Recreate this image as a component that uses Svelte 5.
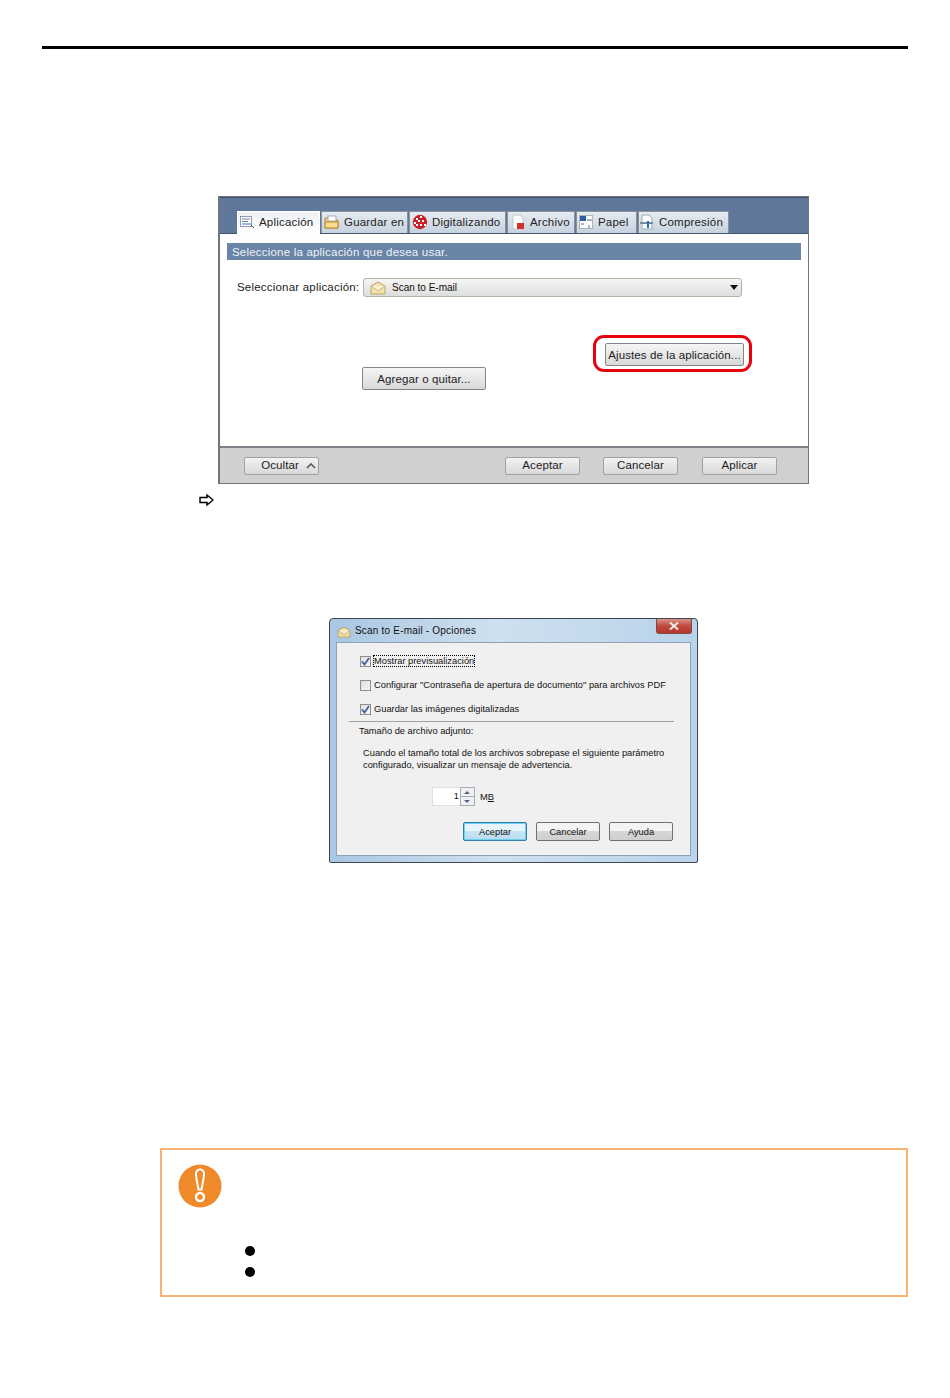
<script>
	const tabs = [
		{ label: 'Aplicación', w: 83, pad: 1, icon: 'app', active: true },
		{ label: 'Guardar en', w: 87, pad: 2, icon: 'folder' },
		{ label: 'Digitalizando', w: 97, pad: 2, icon: 'ball' },
		{ label: 'Archivo', w: 68, pad: 2, icon: 'file' },
		{ label: 'Papel', w: 61, pad: 1, icon: 'paper' },
		{ label: 'Compresión', w: 91, pad: 0, icon: 'press' }
	];

	const options = [
		{ label: 'Mostrar previsualización', checked: true, focus: true },
		{ label: 'Configurar "Contraseña de apertura de documento" para archivos PDF', checked: false },
		{ label: 'Guardar las imágenes digitalizadas', checked: true }
	];
</script>

<div class="page">
	<div class="rule"></div>

	<!-- pantalla de ajustes -->
	<section class="settings">
		<div class="tabbar">
			{#each tabs as tab}
				<div class="tab" class:active={tab.active} style="width: {tab.w}px; padding-left: {tab.pad}px">
					<svg class="tab-icon" viewBox="0 0 16 16" width="16" height="16">
						{#if tab.icon === 'app'}
							<rect x="1.500" y="2.500" width="11" height="10" fill="#fff" stroke="#8c9ab0" />
							<path d="M3 5h8M3 7.500h6" stroke="#6f7f96" />
							<path d="M3 10h9" stroke="#2f78c8" />
							<path d="M12 11l3 3" stroke="#555" />
						{:else if tab.icon === 'folder'}
							<path d="M1 4h5l1 2h7v8H1z" fill="#f3d27a" stroke="#b08a2e" />
							<rect x="4" y="2" width="8" height="5" fill="#fff" stroke="#aaa" />
							<path d="M1 8h13v6H1z" fill="#f7dc8e" stroke="#b08a2e" />
						{:else if tab.icon === 'ball'}
							<circle cx="8" cy="8" r="7.200" fill="#c8202a" />
							<path d="M4 4h2v2H4zM8 2h2v2H8zM6 6h2v2H6zM10 6h2v2h-2zM2 8h2v2H2zM4 10h2v2H4zM8 10h2v2H8zM12 10h2v2h-2z" fill="#fff" />
						{:else if tab.icon === 'file'}
							<path d="M3 1h7l3 3v11H3z" fill="#fff" stroke="#c4c4c4" />
							<rect x="7" y="9" width="7" height="6" fill="#d2332a" />
						{:else if tab.icon === 'paper'}
							<rect x="1.500" y="1.500" width="13" height="13" fill="#fff" stroke="#777" stroke-dasharray="1 1" />
							<rect x="2" y="2" width="6" height="5" fill="#2a5fa8" />
							<path d="M9 6h5M11 11v3M3 10h3" stroke="#666" />
						{:else}
							<path d="M3 1h7l3 3v11H3z" fill="#fff" stroke="#9aa" />
							<path d="M1 9h13" stroke="#7a8a9a" stroke-width="2" />
							<path d="M9 7v7" stroke="#1c6fd0" stroke-width="2" />
						{/if}
					</svg>
					<span>{tab.label}</span>
				</div>
			{/each}
		</div>

		<div class="settings-body">
			<div class="heading">Seleccione la aplicación que desea usar.</div>
			<div class="app-row">
				<span class="app-label">Seleccionar aplicación:</span>
				<div class="select">
					<svg viewBox="0 0 16 14" width="16" height="14">
						<path d="M1 5l7-4 7 4v8H1z" fill="#f5e2a8" stroke="#b9a56a" />
						<path d="M1 5l7 5 7-5" fill="#fbf2d2" stroke="#c9b57a" />
					</svg>
					<span class="select-text">Scan to E-mail</span>
					<span class="caret"></span>
				</div>
			</div>
			<div class="action-row">
				<button class="btn add">Agregar o quitar...</button>
				<div class="ring"><button class="btn prefs">Ajustes de la aplicación...</button></div>
			</div>
		</div>

		<div class="settings-foot">
			<button class="btn flat hide">
				Ocultar
				<svg viewBox="0 0 10 6" width="10" height="6"><path d="M1 5l4-4 4 4" fill="none" stroke="#555" stroke-width="1.600" /></svg>
			</button>
			<button class="btn flat accept">Aceptar</button>
			<button class="btn flat cancel">Cancelar</button>
			<button class="btn flat apply">Aplicar</button>
		</div>
	</section>

	<svg class="arrow" viewBox="0 0 15 12" width="15" height="12">
		<path d="M1 3.500h7V1l6 5-6 5V8.500H1z" fill="#fff" stroke="#000" stroke-width="1.400" />
	</svg>

	<!-- cuadro de opciones -->
	<section class="dialog">
		<div class="titlebar">
			<svg viewBox="0 0 16 14" width="14" height="12">
				<path d="M1 5l7-4 7 4v8H1z" fill="#f1dca0" stroke="#a99a70" />
				<path d="M1 5l7 5 7-5" fill="#faf0d0" stroke="#b8a878" />
			</svg>
			<span class="title">Scan to E-mail - Opciones</span>
			<div class="close">
				<svg viewBox="0 0 10 8" width="10" height="8"><path d="M1 0.500l8 7M9 0.500l-8 7" stroke="#eee" stroke-width="2" /></svg>
			</div>
		</div>
		<div class="panel">
			{#each options as opt}
				<div class="option">
					<span class="check">
						{#if opt.checked}
							<svg viewBox="0 0 9 9" width="9" height="9"><path d="M1 4.500l2.500 3L8 1" fill="none" stroke="#3d5f9e" stroke-width="1.700" /></svg>
						{/if}
					</span>
					<span class:focus={opt.focus}>{opt.label}</span>
				</div>
			{/each}
			<div class="sep"></div>
			<div class="size-title">Tamaño de archivo adjunto:</div>
			<p class="note">Cuando el tamaño total de los archivos sobrepase el siguiente parámetro<br />configurado, visualizar un mensaje de advertencia.</p>
			<div class="size-row">
				<div class="spin-input">1</div>
				<div class="spin">
					<span class="spin-up"></span>
					<span class="spin-down"></span>
				</div>
				<span class="unit">M<u>B</u></span>
			</div>
			<div class="dialog-buttons">
				<button class="vbtn default">Aceptar</button>
				<button class="vbtn">Cancelar</button>
				<button class="vbtn">Ayuda</button>
			</div>
		</div>
	</section>

	<!-- aviso -->
	<section class="notice">
		<svg class="notice-icon" viewBox="0 0 44 44" width="44" height="44">
			<circle cx="22" cy="22" r="21.500" fill="#ee8a2a" />
			<path d="M18 9.500a4 4 0 0 1 8 0c0 5-1.500 10-2.500 16h-3C19.500 19.500 18 14.500 18 9.500z" fill="none" stroke="#fff" stroke-width="2" />
			<circle cx="22" cy="33" r="4" fill="none" stroke="#fff" stroke-width="2.400" />
		</svg>
		<ul class="dots">
			<li></li>
			<li></li>
		</ul>
	</section>
</div>

<style>
	:global(body) {
		background: #fff;
	}

	.page {
		width: 950px;
		height: 1398px;
		padding-top: 46px;
		box-sizing: border-box;
		overflow: hidden;
		font-family: "Liberation Sans", Arial, sans-serif;
		color: #000;
	}

	.rule {
		height: 3px;
		margin: 0 42px 0 42px;
		background: #000;
	}

	.settings {
		width: 591px;
		height: 288px;
		margin: 147px 0 0 218px;
		box-sizing: border-box;
		display: flex;
		flex-direction: column;
		border: 1px solid #72767c;
		border-left-width: 2px;
		background: #fff;
		font-size: 11.500px;
		letter-spacing: 0.2px;
	}

	.tabbar {
		display: flex;
		gap: 1px;
		height: 37px;
		box-sizing: border-box;
		padding: 13px 0 0 17px;
		background: #5e779b;
		border-top: 1px solid #3f5068;
		border-bottom: 1px solid #44566f;
	}

	.tab {
		height: 22px;
		box-sizing: border-box;
		display: flex;
		align-items: center;
		gap: 4px;
		padding-bottom: 2px;
		white-space: nowrap;
		color: #222;
		background: linear-gradient(#e6ebf1, #c6d2df);
		border: 1px solid #8a929c;
		border-bottom: none;
	}

	.tab.active {
		height: 23px;
		position: relative;
		background: linear-gradient(#eef1f5, #fff);
		border-color: #fff;
		padding-bottom: 3px;
	}

	.tab-icon {
		flex: none;
	}

	.settings-body {
		flex: 1;
		padding: 9px 7px 0 7px;
	}

	.heading {
		height: 17px;
		line-height: 18px;
		padding-left: 5px;
		color: #eef2f6;
		background: #6a84a8;
	}

	.app-row {
		display: flex;
		align-items: center;
		margin-top: 18px;
		padding-left: 10px;
	}

	.app-label {
		width: 126px;
		margin-bottom: 1px;
		white-space: nowrap;
		color: #222;
	}

	.select {
		width: 379px;
		height: 19px;
		box-sizing: border-box;
		display: flex;
		align-items: center;
		padding: 0 3px 0 6px;
		border: 1px solid #b4b2a4;
		border-radius: 3px;
		background: linear-gradient(#f6f6f5, #dcdddd);
	}

	.select-text {
		margin-left: 6px;
		font-size: 10px;
		letter-spacing: 0;
		color: #111;
	}

	.caret {
		margin-left: auto;
		border-left: 4px solid transparent;
		border-right: 4px solid transparent;
		border-top: 5px solid #111;
	}

	.action-row {
		position: relative;
		height: 100px;
	}

	.btn {
		font: inherit;
		letter-spacing: 0.1px;
		color: #222;
		padding: 0;
		border: 1px solid #84878a;
		border-radius: 2px;
		background: linear-gradient(#f6f6f6, #d8d8d8);
	}

	.add {
		position: absolute;
		left: 135px;
		top: 70px;
		width: 124px;
		height: 23px;
	}

	/* aro rojo sobre el botón de ajustes */
	.ring {
		position: absolute;
		left: 366px;
		top: 38px;
		width: 159px;
		height: 37px;
		box-sizing: border-box;
		display: flex;
		align-items: center;
		justify-content: center;
		padding: 2px 0 0 4px;
		border: 3.500px solid #e8000f;
		border-radius: 11px;
	}

	.prefs {
		flex: none;
		width: 139px;
		height: 23px;
		white-space: nowrap;
	}

	.settings-foot {
		height: 37px;
		box-sizing: border-box;
		display: flex;
		align-items: flex-start;
		padding: 9px 0 0 24px;
		background: #d0d0d0;
		border-top: 2px solid #7c7f86;
	}

	.flat {
		width: 75px;
		height: 18px;
		line-height: 15px;
		padding-bottom: 1px;
		border-color: #a0a2a6;
		background: linear-gradient(#f2f2f2, #d9d9d9);
	}

	.hide {
		display: flex;
		align-items: center;
		justify-content: flex-end;
		gap: 7px;
		padding-right: 2px;
	}

	.accept {
		margin-left: 186px;
	}

	.cancel {
		margin-left: 23px;
	}

	.apply {
		margin-left: 24px;
	}

	.arrow {
		display: block;
		margin: 10px 0 0 199px;
	}

	.dialog {
		width: 369px;
		height: 245px;
		margin: 112px 0 0 329px;
		box-sizing: border-box;
		display: flex;
		flex-direction: column;
		padding: 0 6px 6px 6px;
		border: 1px solid #3b4752;
		border-radius: 4px 4px 2px 2px;
		background: linear-gradient(90deg, #a9c6e2, #cfe0ef 45%, #b9d3ea);
		font-size: 9.300px;
		color: #111;
	}

	.titlebar {
		height: 23px;
		flex: none;
		display: flex;
		align-items: center;
		gap: 4px;
		padding-left: 1px;
		position: relative;
		font-size: 10px;
	}

	.titlebar svg {
		margin-top: 2px;
	}

	.title {
		letter-spacing: 0.2px;
	}

	.close {
		position: absolute;
		right: -1px;
		top: 0;
		width: 36px;
		height: 15px;
		display: flex;
		align-items: center;
		justify-content: center;
		background: linear-gradient(#d9938a, #c04a3c 50%, #b5382c);
		border: 1px solid #7d4a48;
		border-top: none;
		border-radius: 0 0 3px 3px;
		box-sizing: border-box;
	}

	.close svg {
		margin-top: 0;
	}

	.panel {
		flex: 1;
		box-sizing: border-box;
		padding: 6px 17px 0 23px;
		background: #f0f0f0;
		border: 1px solid #8ea3b6;
	}

	.option {
		height: 24px;
		display: flex;
		align-items: center;
		gap: 3px;
		white-space: nowrap;
	}

	.check {
		width: 11px;
		height: 11px;
		flex: none;
		display: flex;
		align-items: center;
		justify-content: center;
		box-sizing: border-box;
		border: 1px solid #8e8f8f;
		background: linear-gradient(135deg, #dedede, #f6f6f6);
	}

	.focus {
		outline: 1px dotted #000;
	}

	.sep {
		height: 1px;
		margin: 0 0 0 -11px;
		width: 325px;
		background: #a0a0a0;
	}

	.size-title {
		margin-top: 4px;
		margin-left: -1px;
	}

	.note {
		margin: 12px 0 0 3px;
		line-height: 11.500px;
		white-space: nowrap;
	}

	.size-row {
		display: flex;
		align-items: center;
		margin: 16px 0 0 72px;
		height: 19px;
	}

	.spin-input {
		width: 28px;
		height: 19px;
		box-sizing: border-box;
		padding-right: 1px;
		line-height: 17px;
		text-align: right;
		background: #fff;
		border: 1px solid #dcdfe4;
		border-right: none;
	}

	.spin {
		width: 15px;
		height: 19px;
		display: flex;
		flex-direction: column;
		box-sizing: border-box;
		border: 1px solid #a9adb3;
		background: #eef0f3;
	}

	.spin-up,
	.spin-down {
		flex: 1;
		position: relative;
	}

	.spin-up {
		border-bottom: 1px solid #a9adb3;
	}

	.spin-up::after,
	.spin-down::after {
		content: '';
		position: absolute;
		left: 3px;
		top: 3px;
		border-left: 3px solid transparent;
		border-right: 3px solid transparent;
	}

	.spin-up::after {
		border-bottom: 3px solid #56617a;
	}

	.spin-down::after {
		border-top: 3px solid #56617a;
	}

	.unit {
		margin-left: 5px;
	}

	.dialog-buttons {
		display: flex;
		gap: 9px;
		margin: 16px 0 0 103px;
	}

	.vbtn {
		width: 64px;
		height: 19px;
		padding: 0;
		font: inherit;
		color: #111;
		border: 1px solid #707070;
		border-radius: 2px;
		background: linear-gradient(#f4f4f4 45%, #d6d6d6 50%, #cfcfcf);
	}

	.default {
		border-color: #2b7fa8;
		box-shadow: inset 0 0 0 1px #6fd0f0;
		background: linear-gradient(#e8f4fb 45%, #c8e4f4 50%, #b8dcf0);
	}

	.notice {
		position: relative;
		width: 748px;
		height: 149px;
		margin: 285px 0 0 160px;
		box-sizing: border-box;
		border: 2px solid #f9b26f;
	}

	.notice-icon {
		position: absolute;
		left: 16px;
		top: 14px;
	}

	.dots {
		position: absolute;
		left: 83px;
		top: 96px;
		margin: 0;
		padding: 0;
		list-style: none;
		display: flex;
		flex-direction: column;
		gap: 11px;
	}

	.dots li {
		width: 10px;
		height: 10px;
		border-radius: 50%;
		background: #000;
	}
</style>
